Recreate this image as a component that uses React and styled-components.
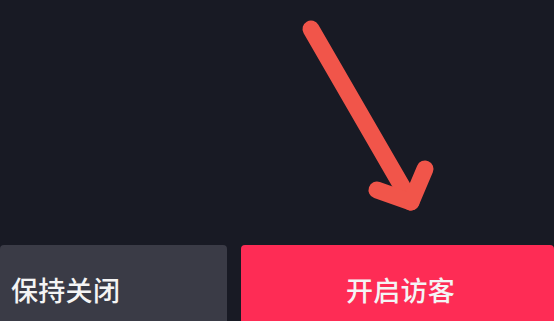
import React from "react";
import styled, { createGlobalStyle } from "styled-components";

const Global = createGlobalStyle`
  html, body { margin: 0; padding: 0; background: #181a24; }
  body { width: 554px; height: 321px; overflow: hidden; }
  #root { height: 100%; }
`;

const Screen = styled.div`
  width: 554px;
  height: 321px;
  display: flex;
  flex-direction: column;
  background: #181a24;
  font-family: "Noto Sans CJK SC", "Noto Sans", sans-serif;
`;

const Stage = styled.div`
  flex: 0 0 245px;
  display: flex;
  justify-content: flex-start;
`;

const ArrowSvg = styled.svg`
  display: block;
  width: 554px;
  height: 245px;
`;

const ButtonRow = styled.div`
  flex: 1;
  display: flex;
  gap: 14px;
`;

const Button = styled.button`
  border: none;
  margin: 0;
  box-sizing: border-box;
  flex: ${(p) => (p.$primary ? "1 1 auto" : "0 0 227px")};
  border-radius: 4px 4px 0 0;
  background: ${(p) => (p.$primary ? "#fe2c55" : "#3a3b46")};
  color: #f4f4f4;
  font-family: "Noto Sans CJK SC", "Noto Sans", sans-serif;
  font-size: 27px;
  font-weight: 500;
  letter-spacing: 0.3px;
  display: flex;
  align-items: center;
  justify-content: ${(p) => (p.$primary ? "center" : "flex-start")};
  padding: 13px 0 0 ${(p) => (p.$primary ? "6px" : "11px")};
`;

export default function App() {
  return (
    <>
      <Global />
      <Screen>
        <Stage>
          <ArrowSvg viewBox="0 0 554 245">
            <g
              fill="none"
              stroke="#f1554a"
              strokeWidth="17"
              strokeLinecap="round"
              strokeLinejoin="round"
            >
              <path d="M311 29 L411 202" />
              <path d="M377 190 L411 202 L425 169" />
            </g>
          </ArrowSvg>
        </Stage>
        <ButtonRow>
          <Button>保持关闭</Button>
          <Button $primary>开启访客</Button>
        </ButtonRow>
      </Screen>
    </>
  );
}
